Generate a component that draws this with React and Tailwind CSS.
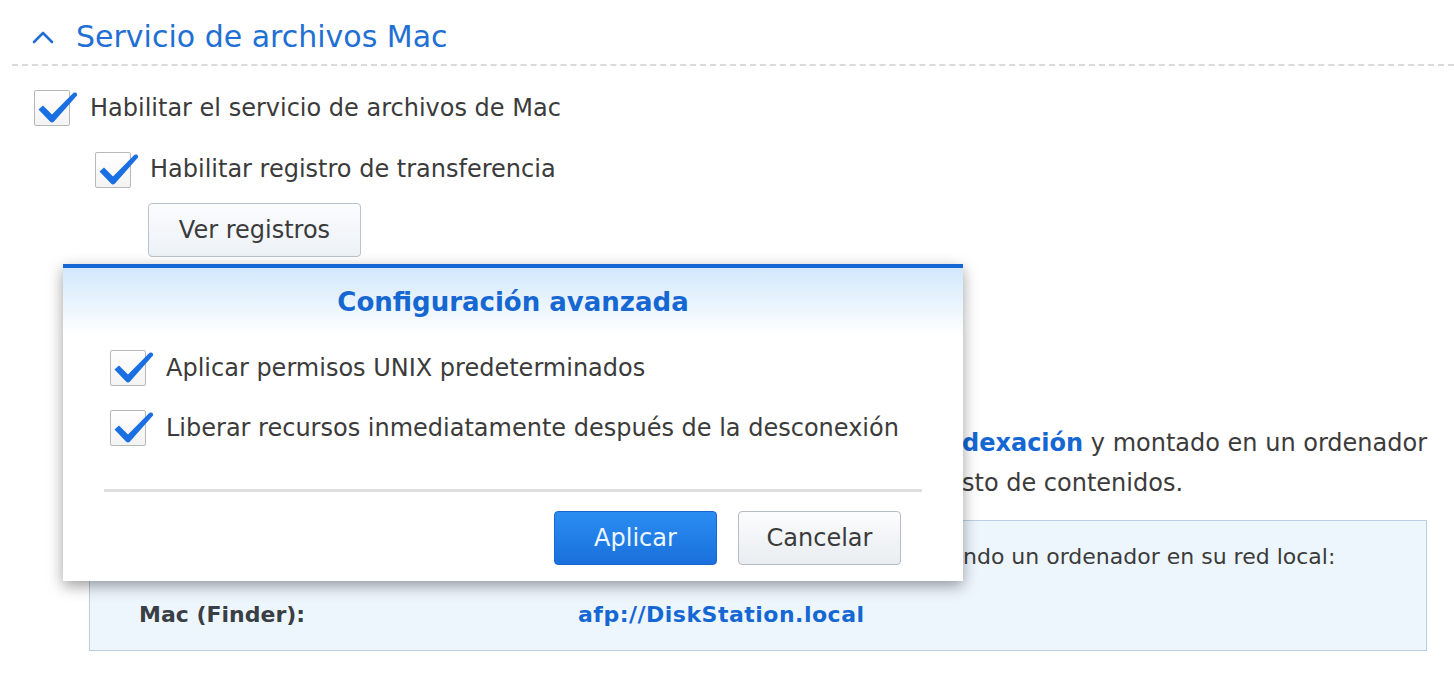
import React from "react";

function Check() {
  return (
    <div className="relative w-[36px] h-[36px] shrink-0 rounded-[2px] border border-[#b8b8b8] bg-gradient-to-b from-white to-[#f3f3f3]">
      <svg
        className="absolute left-0 top-0 overflow-visible"
        width="46"
        height="36"
        viewBox="0 0 46 36"
      >
        <path
          d="M3.5 18.5 L8 14.5 L17 23.5 L38.5 1.8 Q42.5 0.5 42 4.5 L19 30.5 Q17 32.5 15 30.5 Z"
          fill="#1a6fe3"
        />
      </svg>
    </div>
  );
}

export default function App() {
  return (
    <div
      className="relative w-[1454px] h-[674px] overflow-hidden bg-white text-[#3b3b3b]"
      style={{ fontFamily: '"DejaVu Sans", Verdana, sans-serif' }}
    >
      {/* Header */}
      <div className="h-[64px] pt-[10px] pl-[32px] flex items-center gap-[22px]">
        <svg width="22" height="14" viewBox="0 0 22 14">
          <path
            d="M2 12 L11 3 L20 12"
            fill="none"
            stroke="#1f6fd4"
            strokeWidth="2.6"
            strokeLinecap="round"
            strokeLinejoin="round"
          />
        </svg>
        <span className="text-[30px] leading-none text-[#1f6fd4]">
          Servicio de archivos Mac
        </span>
      </div>
      <div className="ml-[12px] border-t-2 border-dashed border-[#dadada]" />

      {/* Checkbox 1 */}
      <div className="mt-[24px] pl-[34px] flex items-center gap-[20px]">
        <Check />
        <span className="text-[24px] leading-none">
          Habilitar el servicio de archivos de Mac
        </span>
      </div>

      {/* Checkbox 2 */}
      <div className="mt-[26px] pl-[95px] flex items-center gap-[19px]">
        <Check />
        <span className="text-[24px] leading-none -mt-[3px]">
          Habilitar registro de transferencia
        </span>
      </div>

      {/* Ver registros */}
      <div className="mt-[15px] ml-[148px]">
        <button className="w-[213px] h-[54px] rounded-[4px] border border-[#bac3ce] bg-gradient-to-b from-[#fbfcfe] to-[#edf2f7] text-[24px] text-[#3b3b3b]">
          Ver registros
        </button>
      </div>

      {/* Background paragraph (left part lies under the dialog) */}
      <div className="mt-[166px] pl-[90px] text-[24px] text-[#3b3b3b]">
        <div className="h-[40px] flex items-center whitespace-nowrap">
          <div className="w-[872px] shrink-0" />
          <span className="font-bold text-[#1567d3]">dexación</span>
          <span>&nbsp;y montado en un ordenador</span>
        </div>
        <div className="h-[40px] flex items-center whitespace-nowrap">
          <div className="w-[872px] shrink-0" />
          <span>sto de contenidos.</span>
        </div>
      </div>

      {/* Info box */}
      <div className="mt-[17px] ml-[89px] w-[1338px] h-[131px] border border-[#bad0e2] bg-[#eef6fd] pt-[15px] pl-[49px] text-[22px]">
        <div className="h-[40px] flex items-center whitespace-nowrap">
          <div className="w-[824px] shrink-0" />
          <span>ndo un ordenador en su red local:</span>
        </div>
        <div className="mt-[18px] h-[40px] flex items-center whitespace-nowrap font-bold">
          <span className="w-[439px] shrink-0 text-[#3a3f45]">Mac (Finder):</span>
          <span className="text-[#1567d3] tracking-[0.5px]">afp://DiskStation.local</span>
        </div>
      </div>

      {/* Dialog */}
      <div className="absolute left-[63px] top-[264px] w-[900px] h-[317px] bg-white border-t-4 border-[#1565d4] shadow-[0_5px_14px_rgba(0,0,0,0.38)]">
        <div className="h-[68px] flex items-center justify-center bg-gradient-to-b from-[#d2e8fb] to-white">
          <span className="text-[26px] font-bold text-[#1667d2] leading-none">
            Configuración avanzada
          </span>
        </div>
        <div className="mt-[14px] pl-[47px] flex items-center gap-[20px]">
          <Check />
          <span className="text-[24px] leading-none">
            Aplicar permisos UNIX predeterminados
          </span>
        </div>
        <div className="mt-[24px] pl-[47px] flex items-center gap-[20px]">
          <Check />
          <span className="text-[24px] leading-none">
            Liberar recursos inmediatamente después de la desconexión
          </span>
        </div>
        <div className="mt-[43px] mx-[41px] h-[3px] bg-[#dfdfdf]" />
        <div className="mt-[19px] pr-[62px] flex justify-end gap-[21px]">
          <button className="w-[163px] h-[54px] rounded-[4px] border border-[#1a66cc] bg-gradient-to-b from-[#2b8df2] to-[#1a70dc] text-[24px] text-[#eef6ff]">
            Aplicar
          </button>
          <button className="w-[163px] h-[54px] rounded-[4px] border border-[#b6bdc6] bg-gradient-to-b from-[#fbfcfd] to-[#e9edf1] text-[24px] text-[#3b3b3b]">
            Cancelar
          </button>
        </div>
      </div>
    </div>
  );
}
